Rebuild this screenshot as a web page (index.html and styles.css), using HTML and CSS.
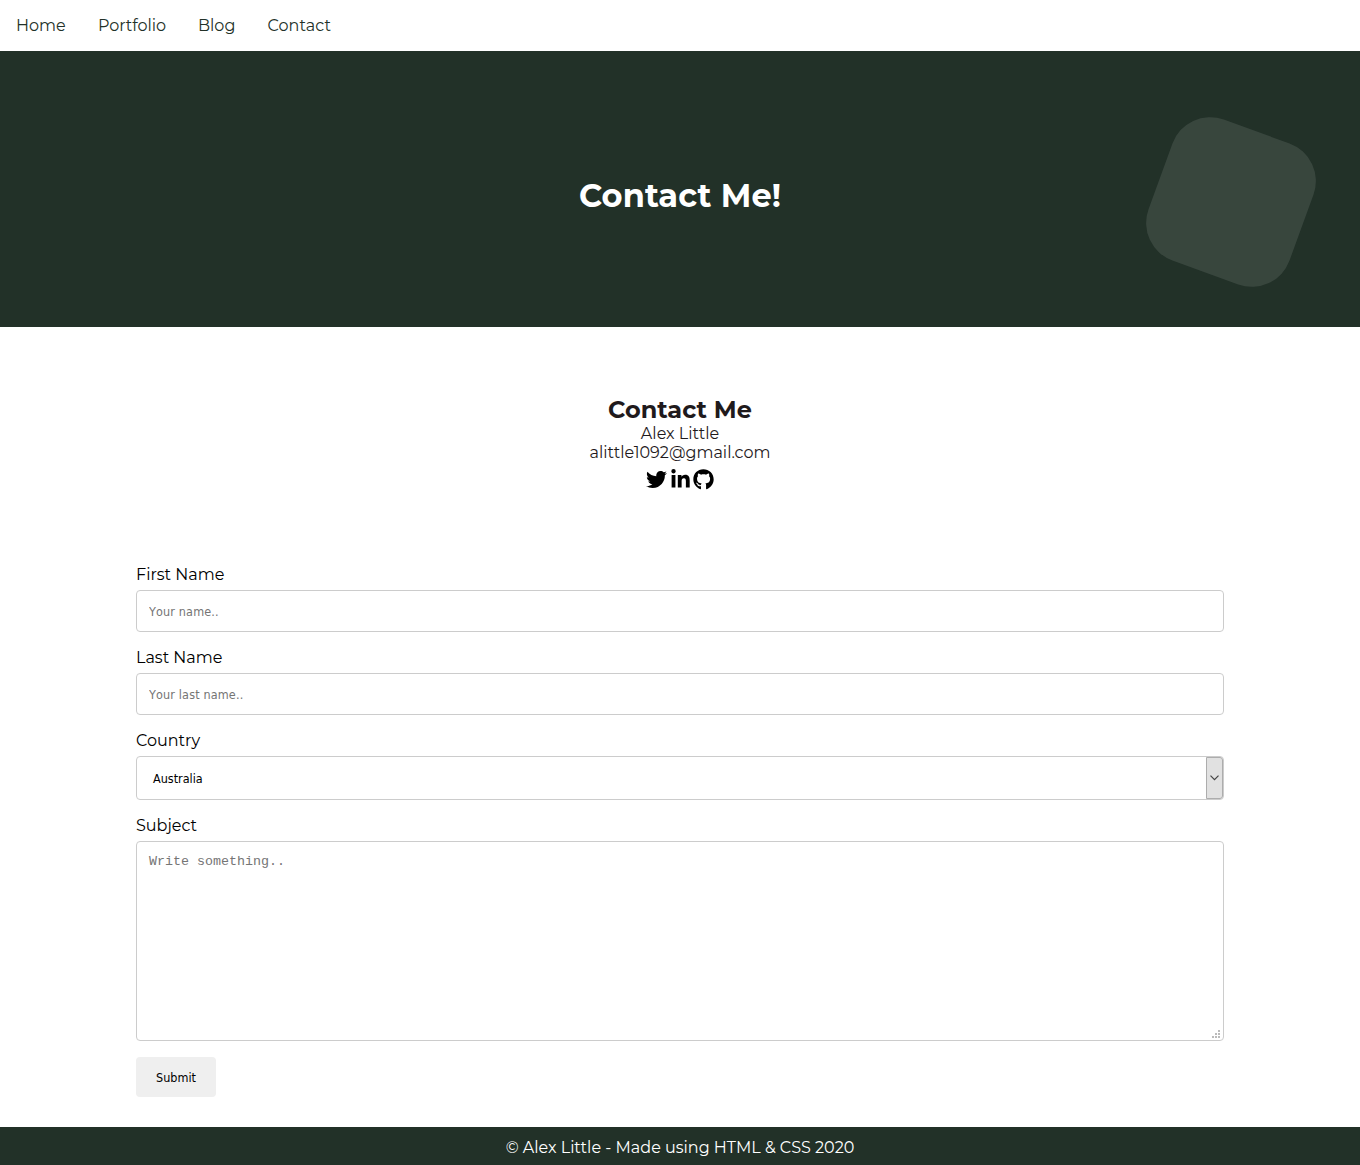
FILE: index.html
```html
<!DOCTYPE html>
<html lang="en">
<head>
<meta charset="utf-8">
<title>Contact Me</title>
<link rel="stylesheet" href="styles.css">
</head>
<body>
<nav class="nav">
  <a class="nav-home" href="#">Home</a>
  <a class="nav-portfolio" href="#">Portfolio</a>
  <a class="nav-blog" href="#">Blog</a>
  <a class="nav-contact" href="#">Contact</a>
</nav>
<header class="hero">
  <h1>Contact Me!</h1>
  <div class="hero-shape"></div>
</header>
<main>
  <section class="intro">
    <h2>Contact Me</h2>
    <p class="person">Alex Little</p>
    <p class="email">alittle1092@gmail.com</p>
    <div class="social">
      <svg class="icon-twitter" viewBox="0 0 512 512"><path d="M459.37 151.716c.325 4.548.325 9.097.325 13.645 0 138.72-105.583 298.558-298.558 298.558-59.452 0-114.68-17.219-161.137-47.106 8.447.974 16.568 1.299 25.34 1.299 49.055 0 94.213-16.568 130.274-44.832-46.132-.975-84.792-31.188-98.112-72.772 6.498.974 12.995 1.624 19.818 1.624 9.421 0 18.843-1.3 27.614-3.573-48.081-9.747-84.143-51.98-84.143-102.985v-1.299c13.969 7.797 30.214 12.67 47.431 13.319-28.264-18.843-46.781-51.005-46.781-87.391 0-19.492 5.197-37.36 14.294-52.954 51.655 63.675 129.3 105.258 216.365 109.807-1.624-7.797-2.599-15.918-2.599-24.04 0-57.828 46.782-104.934 104.934-104.934 30.213 0 57.502 12.67 76.67 33.137 23.715-4.548 46.456-13.32 66.599-25.34-7.798 24.366-24.366 44.833-46.132 57.827 21.117-2.273 41.584-8.122 60.426-16.243-14.292 20.791-32.161 39.308-52.628 54.253z"/></svg>
      <svg class="icon-linkedin" viewBox="0 0 448 512"><path d="M100.28 448H7.4V148.9h92.88zM53.79 108.1C24.09 108.1 0 83.5 0 53.8a53.79 53.79 0 0 1 107.58 0c0 29.7-24.1 54.3-53.79 54.3zM447.9 448h-92.68V302.4c0-34.7-.7-79.2-48.29-79.2-48.29 0-55.69 37.7-55.69 76.7V448h-92.78V148.9h89.08v40.8h1.3c12.4-23.5 42.69-48.3 87.88-48.3 94 0 111.28 61.9 111.28 142.3V448z"/></svg>
      <svg class="icon-github" viewBox="0 0 496 512"><path d="M165.9 397.4c0 2-2.3 3.6-5.2 3.6-3.3.3-5.6-1.3-5.6-3.6 0-2 2.3-3.6 5.2-3.6 3-.3 5.6 1.3 5.6 3.6zm-31.1-4.5c-.7 2 1.3 4.3 4.3 4.9 2.6 1 5.6 0 6.2-2s-1.3-4.3-4.3-5.2c-2.6-.7-5.5.3-6.2 2.3zm44.2-1.7c-2.9.7-4.9 2.6-4.6 4.9.3 2 2.9 3.3 5.9 2.6 2.9-.7 4.9-2.6 4.6-4.6-.3-1.9-3-3.2-5.9-2.9zM244.8 8C106.1 8 0 113.3 0 252c0 110.9 69.8 205.8 169.5 239.2 12.8 2.3 17.3-5.6 17.3-12.1 0-6.2-.3-40.4-.3-61.4 0 0-70 15-84.7-29.8 0 0-11.4-29.1-27.8-36.6 0 0-22.9-15.7 1.6-15.4 0 0 24.9 2 38.6 25.8 21.9 38.6 58.6 27.5 72.9 20.9 2.3-16 8.8-27.1 16-33.7-55.9-6.2-112.3-14.3-112.3-110.5 0-27.5 7.6-41.3 23.6-58.9-2.6-6.5-11.1-33.3 2.6-67.9 20.9-6.5 69 27 69 27 20-5.6 41.5-8.5 62.8-8.5s42.8 2.9 62.8 8.5c0 0 48.1-33.6 69-27 13.7 34.7 5.2 61.4 2.6 67.9 16 17.7 25.8 31.5 25.8 58.9 0 96.5-58.9 104.2-114.8 110.5 9.2 7.9 17 22.9 17 46.4 0 33.7-.3 75.4-.3 83.6 0 6.5 4.6 14.4 17.3 12.1C428.2 457.8 496 362.9 496 252 496 113.3 383.5 8 244.8 8z"/></svg>
    </div>
  </section>
  <form class="form">
    <label for="fname">First Name</label>
    <input class="field" type="text" id="fname" placeholder="Your name..">
    <label for="lname">Last Name</label>
    <input class="field" type="text" id="lname" placeholder="Your last name..">
    <label for="country">Country</label>
    <div class="select" id="country">
      <span>Australia</span>
      <div class="select-arrow"><svg viewBox="0 0 9 6"><path d="M.5 .7L4.5 4.7L8.5 .7"/></svg></div>
    </div>
    <label for="subject">Subject</label>
    <div class="area">
      <textarea class="field" id="subject" placeholder="Write something.."></textarea>
      <svg class="grip" viewBox="0 0 8 8"><path d="M6 0h2v2h-2zM3 3h2v2h-2zM6 3h2v2h-2zM0 6h2v2h-2zM3 6h2v2h-2zM6 6h2v2h-2z"/></svg>
    </div>
    <button class="submit" type="button">Submit</button>
  </form>
</main>
<footer class="footer"><p>© Alex Little - Made using HTML &amp; CSS 2020</p></footer>
</body>
</html>
```
FILE: styles.css
```css
* { box-sizing: border-box; margin: 0; padding: 0; }
body {
  font-family: Montserrat, Inter, sans-serif;
  font-size: 16px;
  line-height: 19px;
  color: #000;
  background: #fff;
}
.nav { display: flex; height: 51px; padding: 16px; gap: 32px; }
.nav a { color: #223128; text-decoration: none; white-space: nowrap; }
.nav-home { width: 50px; }
.nav-portfolio { width: 68px; letter-spacing: -.05px; }
.nav-blog { width: 37.4px; }
.nav-contact { letter-spacing: .1px; }
.hero {
  position: relative;
  display: flex;
  align-items: center;
  justify-content: center;
  height: 276px;
  padding-top: 12px;
  background: #223128;
}
.hero h1 { font-size: 32px; line-height: 39px; letter-spacing: .1px; color: #fff; }
.hero-shape {
  position: absolute;
  top: 76px;
  right: 54px;
  width: 150px;
  height: 150px;
  border-radius: 40px;
  background: rgba(255, 255, 255, .1);
  transform: rotate(20deg);
}
.intro { padding-top: 68px; height: 238px; text-align: center; color: #1f1a1c; }
.intro h2 { font-size: 24px; line-height: 29px; }
.social { display: flex; justify-content: center; gap: 3px; padding-top: 7px; fill: #000; }
.social svg { height: 21px; }
.icon-twitter { width: 21px; margin: 0 .3px 0 -.3px; }
.icon-linkedin { width: 19px; }
.icon-github { width: 21px; }
.form { width: 1088px; height: 562px; margin: 0 auto; }
.form label { display: block; width: max-content; }
.field {
  display: block;
  width: 100%;
  height: 42px;
  margin: 6px 0 16px;
  padding: 12px;
  border: 1px solid #ccc;
  border-radius: 4px;
  font: 12.5px/16px "DejaVu Sans Condensed", "DejaVu Sans", sans-serif;
  font-stretch: condensed;
  font-kerning: none;
  letter-spacing: .15px;
  outline: none;
  background: #fff;
}
.field::placeholder { color: #757575; }
.select {
  display: flex;
  align-items: center;
  justify-content: space-between;
  height: 44px;
  margin: 6px 0 16px;
  padding-left: 16px;
  border: 1px solid #ccc;
  border-radius: 4px;
  font: 12.5px/16px "DejaVu Sans Condensed", "DejaVu Sans", sans-serif;
  font-stretch: condensed;
}
.select span { padding-top: 2px; }
.select-arrow {
  display: flex;
  align-items: center;
  justify-content: center;
  width: 17px;
  height: 42px;
  border: 1px solid #adadad;
  border-radius: 0 3px 3px 0;
  background: #e1e1e1;
}
.select-arrow svg { width: 9px; height: 6px; fill: none; stroke: #444; stroke-width: 1.2; }
.area { position: relative; }
.area .field {
  height: 200px;
  resize: none;
  font: 13.333px/16px "Liberation Mono", monospace;
  letter-spacing: 0;
}
.grip { position: absolute; right: 4px; bottom: 3px; width: 8px; height: 8px; fill: #bbb; }
.submit {
  display: block;
  width: 80px;
  height: 40px;
  padding-top: 2px;
  border: 0;
  border-radius: 4px;
  background: #efefef;
  color: #000;
  font: 12.5px/16px "DejaVu Sans Condensed", "DejaVu Sans", sans-serif;
  font-stretch: condensed;
}
.footer { height: 38px; padding-top: 11px; background: #223128; color: #fff; text-align: center; }
```
